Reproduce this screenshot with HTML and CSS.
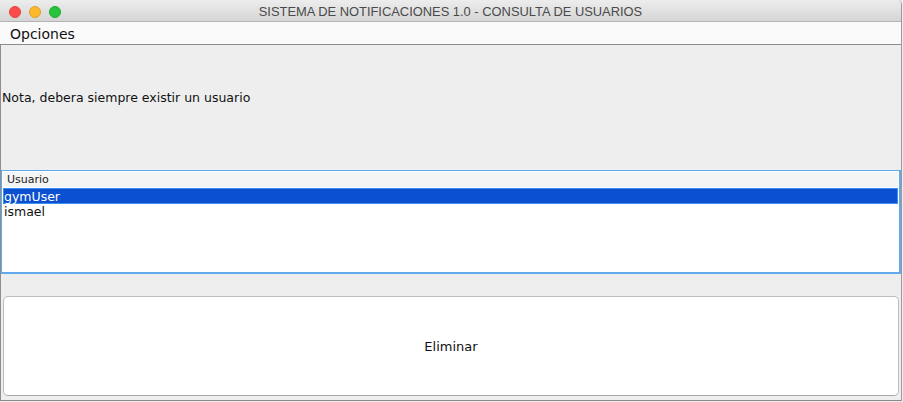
FILE: index.html
```html
<!DOCTYPE html>
<html lang="es">
<head>
<meta charset="utf-8">
<title>SISTEMA DE NOTIFICACIONES 1.0 - CONSULTA DE USUARIOS</title>
<link rel="stylesheet" href="styles.css">
</head>
<body>
<div class="window">
  <div class="titlebar">
    <div class="lights">
      <span class="light red"></span>
      <span class="light yellow"></span>
      <span class="light green"></span>
    </div>
    <div class="title">SISTEMA DE NOTIFICACIONES 1.0 - CONSULTA DE USUARIOS</div>
  </div>
  <div class="menubar"><span class="menu">Opciones</span></div>
  <div class="content">
    <p class="note">Nota, debera siempre existir un usuario</p>
    <div class="table">
      <div class="thead">Usuario</div>
      <div class="row selected">gymUser</div>
      <div class="row">ismael</div>
    </div>
    <button class="btn">Eliminar</button>
  </div>
</div>
</body>
</html>
```
FILE: styles.css
```css
* { box-sizing: border-box; }
html, body { margin: 0; padding: 0; background: #ececec; }
body { font-family: "DejaVu Sans", "Liberation Sans", sans-serif; color: #111; }
.window {
  width: 902px;
  height: 401px;
  display: flex;
  flex-direction: column;
  background: #eeeeee;
  border-right: 1px solid #9a9a9a;
  border-bottom: 1px solid #8a8a8a;
  border-top-right-radius: 5px;
  overflow: hidden;
}
.titlebar {
  height: 22px;
  flex: none;
  position: relative;
  display: flex;
  align-items: center;
  justify-content: center;
  background: linear-gradient(#ededed, #d5d5d5);
  border-bottom: 1px solid #b4b4b4;
}
.lights {
  position: absolute;
  left: 9px;
  top: 6px;
  display: flex;
  gap: 8px;
}
.light { width: 12px; height: 12px; border-radius: 50%; display: block; }
.red { background: #fc4c4a; border: 1px solid #e0443e; }
.yellow { background: #fdb82b; border: 1px solid #dea123; }
.green { background: #27c53e; border: 1px solid #1aab29; }
.title {
  font-family: "Liberation Sans", sans-serif;
  font-size: 12.9px;
  color: #4a4a4a;
  padding-top: 1px;
}
.menubar {
  height: 23px;
  flex: none;
  background: #fafafa;
  border-bottom: 1px solid #8c8c8c;
  padding-left: 10px;
  display: flex;
  align-items: center;
}
.menu { font-size: 14px; color: #111; padding-top: 1px; }
.content {
  flex: 1;
  display: flex;
  flex-direction: column;
  border-left: 1px solid #8e8e8e;
}
.note {
  margin: 45px 0 0 1px;
  font-size: 12.5px;
  line-height: 16px;
  color: #111;
}
.table {
  margin: 64px 0 0 0;
  height: 104px;
  background: #fff;
  border: 2px solid #62a9ec;
  border-top-width: 1px;
  border-left-width: 1px;
  padding: 1px 1px 0 1px;
}
.thead {
  height: 16px;
  background: #f5f5f5;
  font-size: 11px;
  line-height: 16px;
  padding-left: 4px;
  color: #222;
  border-bottom: 1px solid #fff;
}
.row {
  height: 16px;
  font-size: 12.5px;
  line-height: 15px;
  padding-left: 1px;
  color: #111;
}
.row.selected {
  background: #0a50d0;
  color: #fff;
  border: 1px solid #3e8ff0;
  padding-left: 0;
}
.btn {
  margin: 22px 0 0 2px;
  width: 896px;
  height: 100px;
  background: #fff;
  border: 1px solid #bdbdbd;
  border-bottom-color: #a8a8a8;
  border-radius: 5px;
  font-family: "DejaVu Sans", "Liberation Sans", sans-serif;
  font-size: 13px;
  color: #111;
  padding: 0;
}
```
